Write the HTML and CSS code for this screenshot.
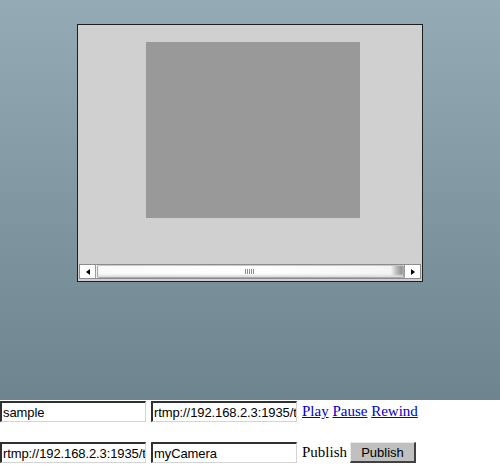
FILE: index.html
```html
<!DOCTYPE html>
<html>
<head>
<meta charset="utf-8">
<link rel="stylesheet" href="styles.css">
</head>
<body>
<div class="stage">
  <div class="player">
    <div class="screen-area">
      <div class="video"></div>
    </div>
    <div class="hscroll">
      <div class="sbtn"><span class="tri-left"></span></div>
      <div class="thumb">
        <div class="grip"><i></i><i></i><i></i><i></i><i></i></div>
      </div>
      <div class="sbtn right"><span class="tri-right"></span></div>
    </div>
  </div>
</div>
<div class="controls">
  <div class="row">
    <input class="field" type="text" value="sample">
    <input class="field" type="text" value="rtmp://192.168.2.3:1935/test">
    <span class="links"><a href="#">Play</a> <a href="#">Pause</a> <a href="#">Rewind</a></span>
  </div>
  <div class="row second">
    <input class="field" type="text" value="rtmp://192.168.2.3:1935/test">
    <input class="field" type="text" value="myCamera">
    <span class="label">Publish</span>
    <button class="pub">Publish</button>
  </div>
</div>
</body>
</html>
```
FILE: styles.css
```css
html, body { margin: 0; padding: 0; background: #fff; }
body { width: 500px; height: 472px; overflow: hidden; font-family: "Liberation Serif", "Times New Roman", serif; }

.stage {
  width: 500px;
  height: 400px;
  box-sizing: border-box;
  padding: 24px 0 0 77px;
  background: linear-gradient(#94aab5, #6e848f);
}
.player {
  width: 344px;
  height: 256px;
  border: 1px solid #1c1f22;
  background: #d0d0d0;
  display: flex;
  flex-direction: column;
}
.screen-area {
  flex: 1;
  padding: 17px 0 0 68px;
}
.video {
  width: 214px;
  height: 176px;
  background: #999999;
}
.hscroll {
  height: 15px;
  margin: 0 1px 2px 1px;
  box-sizing: border-box;
  border: 1px solid #8c8c8c;
  background: #f0f0f0;
  display: flex;
}
.sbtn {
  width: 15px;
  background: #fff;
  border-right: 1px solid #9a9a9a;
  display: flex;
  align-items: center;
  justify-content: center;
}
.sbtn.right { border-right: 0; border-left: 1px solid #9a9a9a; }
.tri-left {
  width: 0; height: 0;
  border-top: 3px solid transparent;
  border-bottom: 3px solid transparent;
  border-right: 4px solid #000;
}
.tri-right {
  width: 0; height: 0;
  border-top: 3px solid transparent;
  border-bottom: 3px solid transparent;
  border-left: 4px solid #000;
}
.thumb {
  flex: 1;
  margin: 0 0 0 1px;
  border: 1px solid #a8a8a8;
  border-top-color: #c8c8c8;
  border-radius: 2px;
  background: linear-gradient(90deg, #fafafa 0%, #ffffff 50%, #f4f4f4 96%, #b8b8b8 98%, #8a8a8a 100%);
  box-shadow: inset 0 -2px 2px #dedede;
  display: flex;
  align-items: center;
  justify-content: center;
}
.grip { display: flex; gap: 1px; height: 5px; margin-left: -2px; }
.grip i { display: block; width: 1px; height: 5px; background: #8e8e8e; }

.controls { padding-top: 1px; }
.row { display: flex; align-items: center; height: 21px; }
.row.second { margin-top: 20px; }
.field {
  width: 146px;
  height: 21px;
  box-sizing: border-box;
  margin: 0 5px 0 0;
  padding: 0 0 0 1px;
  border-style: solid;
  border-width: 2px 1px 1px 2px;
  border-color: #303030 #d4d4d4 #d4d4d4 #303030;
  background: #fff;
  font-family: "Liberation Sans", Arial, sans-serif;
  font-size: 13px;
  letter-spacing: -0.1px;
  color: #000;
  outline: none;
}
.links, .label {
  font-size: 15px;
}
.links a { color: #0000cc; text-decoration: underline; }
.label { color: #000; margin-right: 3px; }
.pub {
  width: 66px;
  height: 21px;
  padding: 0;
  margin: 0;
  box-sizing: border-box;
  background: #c0c0c0;
  border-style: solid;
  border-width: 1px 2px 2px 1px;
  border-color: #e8e8e8 #404040 #404040 #e8e8e8;
  font-family: "Liberation Sans", Arial, sans-serif;
  font-size: 13px;
  color: #000;
}
```
